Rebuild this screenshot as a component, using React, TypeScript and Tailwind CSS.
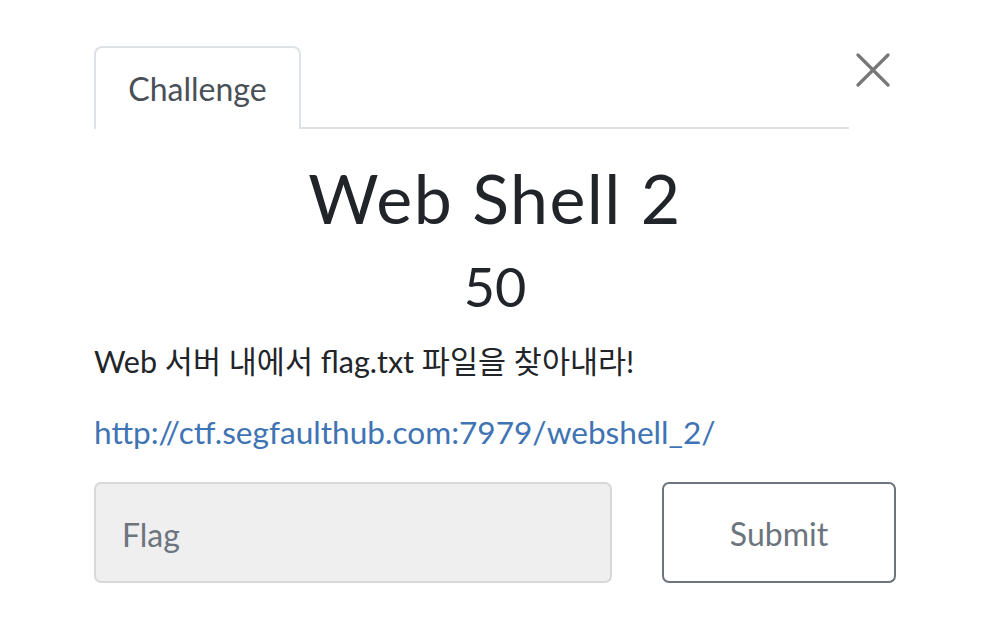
import React from 'react'

export default function App() {
  return (
    <div className="w-[990px] h-[630px] bg-white px-[94px] pt-[46px]" style={{ fontFamily: 'Lato, "Noto Sans CJK KR", sans-serif' }}>
      {/* header with tab + close */}
      <div className="flex items-start">
        <div className="flex-1 flex border-b-2 border-[#dee2e6]">
          <div className="h-[83px] w-[207px] -mb-[2px] border-2 border-b-0 border-[#dee2e6] rounded-t-[8px] bg-white flex items-center justify-center text-[32px] text-[#495057]">
            Challenge
          </div>
        </div>
        <button className="w-[47px] h-[48px] flex items-center justify-end">
          <svg width="34" height="34" viewBox="0 0 34 34" className="mr-[6px]">
            <path d="M2 2 L32 32 M32 2 L2 32" stroke="#777" strokeWidth="3.2" strokeLinecap="round" />
          </svg>
        </button>
      </div>

      <h1 className="text-center text-[68px] leading-none tracking-[1.5px] text-[#212529] mt-[35px]">Web Shell 2</h1>
      <div className="text-center text-[54px] leading-none text-[#212529] mt-[28px]">50</div>

      <p className="text-[30.5px] leading-none text-[#212529] mt-[32px]">Web 서버 내에서 flag.txt 파일을 찾아내라!</p>

      <a href="#" className="block text-[31.6px] leading-none text-[#3e74b4] mt-[40px]">
        http://ctf.segfaulthub.com:7979/webshell_2/
      </a>

      <div className="flex gap-[50px] mt-[34px]">
        <input
          placeholder="Flag"
          className="w-[518px] h-[101px] bg-[#efefef] border-2 border-[#d6d8da] rounded-[7px] px-[26px] pt-[3px] text-[32px] placeholder:text-[#6c757d] outline-none"
        />
        <button className="flex-1 h-[101px] border-2 border-[#6c757d] rounded-[7px] pt-[3px] text-[32px] text-[#6c757d] bg-white">
          Submit
        </button>
      </div>
    </div>
  )
}
